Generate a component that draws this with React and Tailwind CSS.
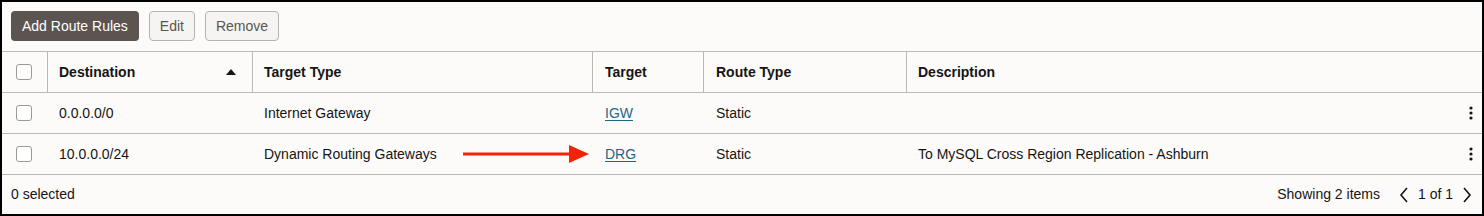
import React from "react";

const cols = ["w-[46px]", "w-[205px]", "w-[340px]", "w-[111px]", "w-[203px]", "flex-1"];

function Checkbox() {
  return <div className="w-[16px] h-[16px] rounded-[3px] border border-[#9e9892] bg-white" />;
}

function Kebab() {
  return (
    <svg width="4" height="14" viewBox="0 0 4 14" className="block">
      <circle cx="2" cy="2" r="1.6" fill="#161513" />
      <circle cx="2" cy="7" r="1.6" fill="#161513" />
      <circle cx="2" cy="12" r="1.6" fill="#161513" />
    </svg>
  );
}

function Arrow() {
  return (
    <svg width="128" height="20" viewBox="0 0 128 20" className="block">
      <rect x="0" y="8.5" width="108" height="3" fill="#f5220a" />
      <polygon points="106,1 126,10 106,19" fill="#f5220a" />
    </svg>
  );
}

function Row({ dest, ttype, target, rtype, desc, arrow }) {
  return (
    <div className="flex h-[41px] items-center border-b border-[#bcb8b3] text-[14px] text-[#161513]">
      <div className={`${cols[0]} flex items-center pl-[14px]`}>
        <Checkbox />
      </div>
      <div className={`${cols[1]} pl-[11px]`}>{dest}</div>
      <div className={`${cols[2]} pl-[11px] flex items-center`}>
        <span className="w-[199px]">{ttype}</span>
        {arrow && <Arrow />}
      </div>
      <div className={`${cols[3]} pl-[12px]`}>
        <a className="text-[#1d6782] underline underline-offset-2 decoration-1">{target}</a>
      </div>
      <div className={`${cols[4]} pl-[12px]`}>{rtype}</div>
      <div className={`${cols[5]} pl-[11px] pr-[9px] flex items-center justify-between`}>
        <span>{desc}</span>
        <Kebab />
      </div>
    </div>
  );
}

export default function App() {
  return (
    <div
      className="w-[1484px] h-[216px] border-2 border-black bg-[#fcfbfa] flex flex-col"
      style={{ fontFamily: '"Liberation Sans", Arial, sans-serif' }}
    >
      <div className="flex gap-[10px] pl-[9px] pt-[9px] pb-[10px] border-b border-[#bcb8b3]">
        <button className="h-[30px] px-[11px] rounded-[4px] bg-[#5b5450] text-white text-[14px]">
          Add Route Rules
        </button>
        <button className="h-[30px] px-[10px] rounded-[4px] bg-[#f5f4f2] border border-[#b7b2ad] text-[#5a5450] text-[14px]">
          Edit
        </button>
        <button className="h-[30px] px-[10px] rounded-[4px] bg-[#f5f4f2] border border-[#b7b2ad] text-[#5a5450] text-[14px]">
          Remove
        </button>
      </div>
      <div className="flex h-[41px] items-stretch border-b border-[#bcb8b3] text-[14px] font-bold text-[#161513]">
        <div className={`${cols[0]} flex items-center pl-[14px] border-r border-[#bcb8b3]`}>
          <Checkbox />
        </div>
        <div className={`${cols[1]} flex items-center justify-between pl-[11px] pr-[16px] border-r border-[#bcb8b3]`}>
          <span>Destination</span>
          <svg width="10" height="6" viewBox="0 0 10 6" className="block">
            <polygon points="5,0 10,6 0,6" fill="#161513" />
          </svg>
        </div>
        <div className={`${cols[2]} flex items-center pl-[11px] border-r border-[#bcb8b3]`}>Target Type</div>
        <div className={`${cols[3]} flex items-center pl-[12px] border-r border-[#bcb8b3]`}>Target</div>
        <div className={`${cols[4]} flex items-center pl-[12px] border-r border-[#bcb8b3]`}>Route Type</div>
        <div className={`${cols[5]} flex items-center pl-[11px]`}>Description</div>
      </div>
      <Row dest="0.0.0.0/0" ttype="Internet Gateway" target="IGW" rtype="Static" desc="" />
      <Row
        dest="10.0.0.0/24"
        ttype="Dynamic Routing Gateways"
        target="DRG"
        rtype="Static"
        desc="To MySQL Cross Region Replication - Ashburn"
        arrow
      />
      <div className="flex-1 flex items-center justify-between pl-[9px] pr-[10px] text-[14px] text-[#161513]">
        <span>0 selected</span>
        <div className="flex items-center">
          <span>Showing 2 items</span>
          <svg width="10" height="16" viewBox="0 0 10 16" className="block ml-[19px]">
            <polyline points="8,1 2,8 8,15" fill="none" stroke="#161513" strokeWidth="1.6" />
          </svg>
          <span className="ml-[9px]">1 of 1</span>
          <svg width="10" height="16" viewBox="0 0 10 16" className="block ml-[9px]">
            <polyline points="2,1 8,8 2,15" fill="none" stroke="#161513" strokeWidth="1.6" />
          </svg>
        </div>
      </div>
    </div>
  );
}
